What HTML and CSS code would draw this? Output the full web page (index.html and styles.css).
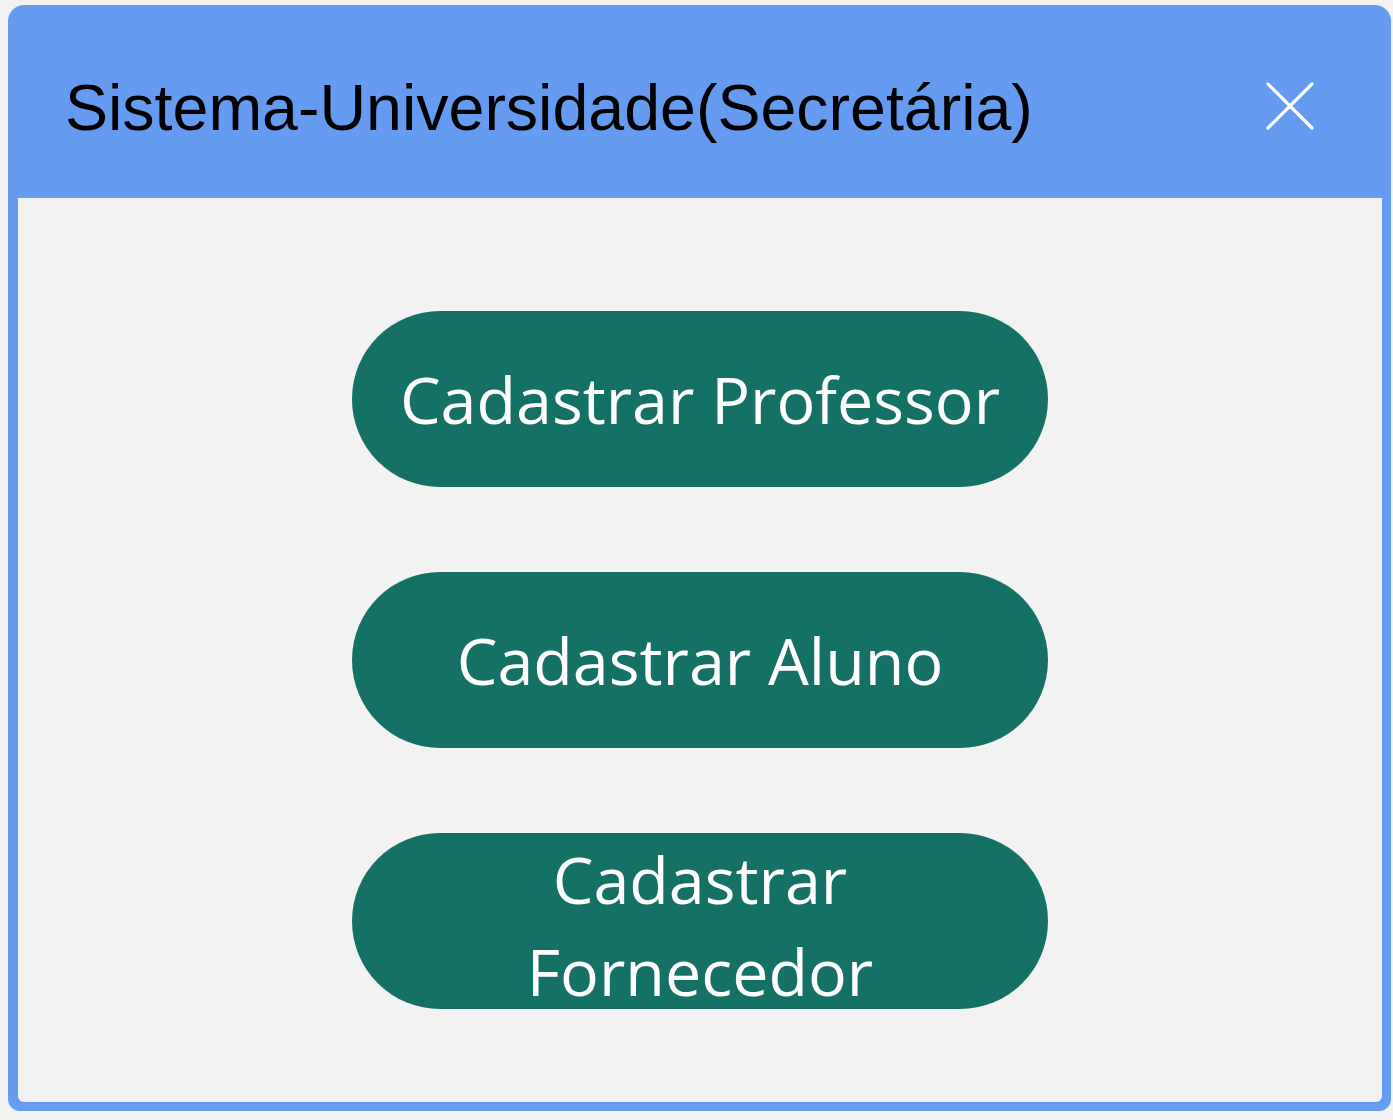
FILE: index.html
```html
<!DOCTYPE html>
<html lang="pt">
<head>
<meta charset="utf-8">
<title>Sistema-Universidade(Secretária)</title>
<link rel="stylesheet" href="styles.css">
</head>
<body>
<div class="window">
  <header class="titlebar">
    <h1 class="title">Sistema-Universidade(Secretária)</h1>
    <button class="close" aria-label="Fechar">
      <svg width="50" height="50" viewBox="0 0 50 50"><path d="M3 3L47 47M47 3L3 47" stroke="#fff" stroke-width="3.2" stroke-linecap="round" fill="none"/></svg>
    </button>
  </header>
  <main class="content">
    <button class="action">Cadastrar Professor</button>
    <button class="action">Cadastrar Aluno</button>
    <button class="action">Cadastrar Fornecedor</button>
  </main>
</div>
</body>
</html>
```
FILE: styles.css
```css
html, body {
  margin: 0;
  padding: 0;
  background: #f2f2f2;
}
body {
  padding: 5px 2px 9px 8px;
}
.window {
  width: 1383px;
  height: 1106px;
  background: #659cf2;
  border-radius: 16px 16px 12px 12px;
  display: flex;
  flex-direction: column;
  box-sizing: border-box;
  padding: 0 9px 9px 10px;
}
.titlebar {
  height: 193px;
  box-sizing: border-box;
  display: flex;
  align-items: flex-start;
  justify-content: space-between;
  padding: 71px 67px 0 47px;
  flex-shrink: 0;
}
.title {
  margin: 0;
  font-family: "Liberation Sans", Arial, sans-serif;
  font-weight: normal;
  font-size: 64.5px;
  color: #000;
  line-height: 1;
}
.close {
  background: none;
  border: none;
  padding: 0;
  width: 50px;
  height: 50px;
  display: flex;
  margin-top: 5px;
}
.content {
  flex: 1;
  background: #f2f2f2;
  border-radius: 0 0 6px 6px;
  display: flex;
  flex-direction: column;
  align-items: center;
  padding-top: 113px;
  gap: 85px;
}
.action {
  width: 696px;
  height: 176px;
  border-radius: 88px;
  border: none;
  background: #157066;
  color: #fff;
  font-family: "Open Sans", "Noto Sans", sans-serif;
  font-size: 64.6px;
  line-height: 92px;
  padding: 0 38px;
  flex-shrink: 0;
}
```
